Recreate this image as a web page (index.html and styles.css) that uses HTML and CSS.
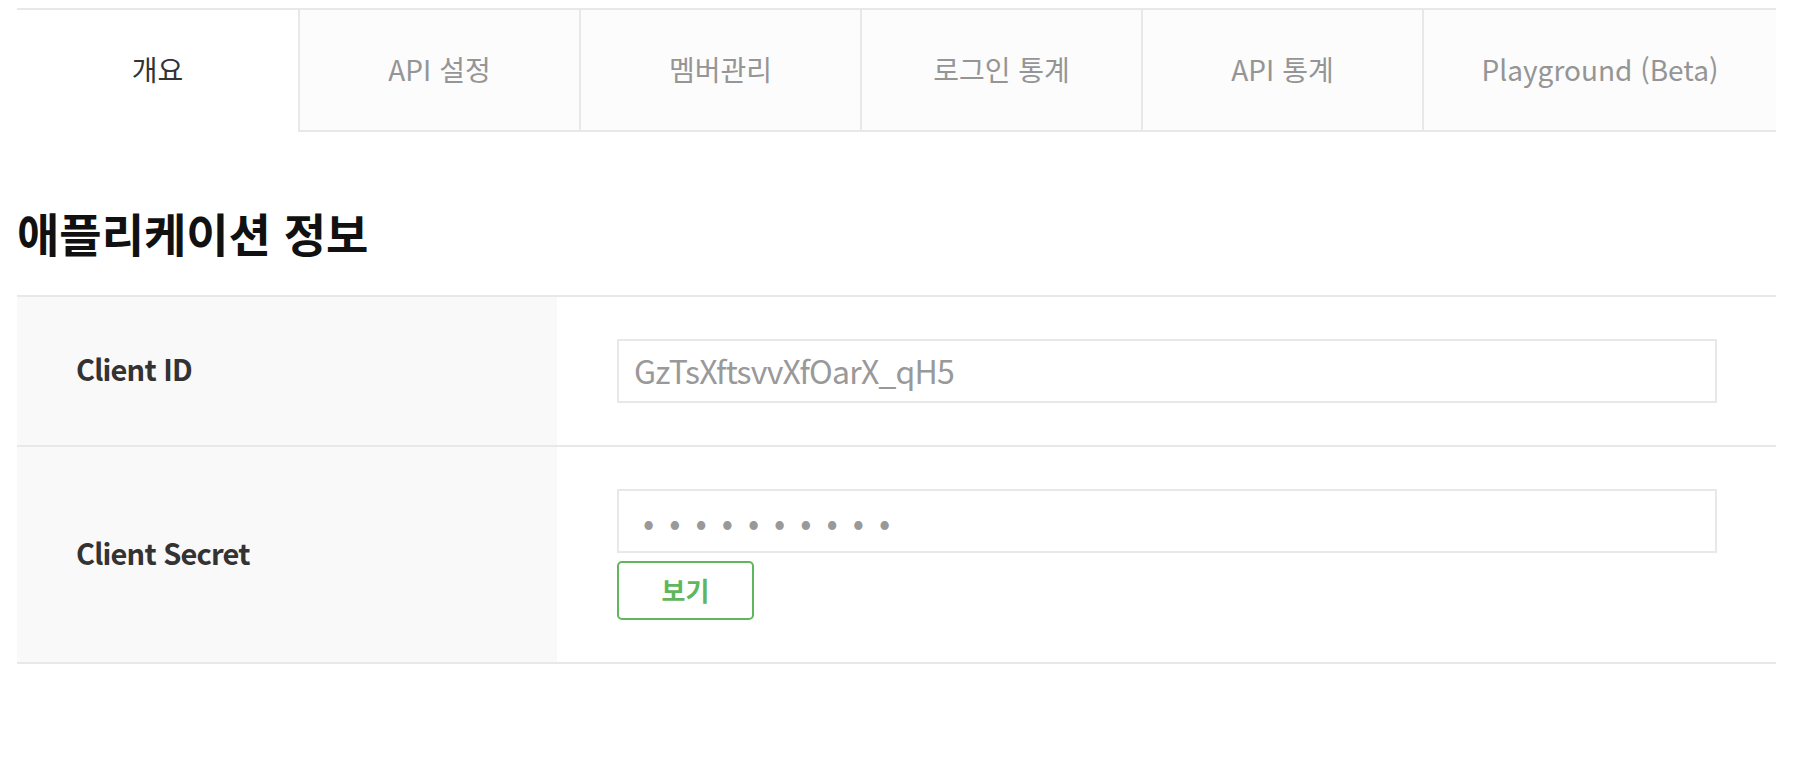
FILE: index.html
```html
<!DOCTYPE html>
<html lang="ko">

<head>
    <meta charset="UTF-8">
    <title>애플리케이션 정보</title>
    <meta name="viewport" content="width=device-width, initial-scale=1">
    <link rel="stylesheet" href="styles.css">
</head>

<body>
    <div class="app">
        <nav class="tabs">
            <a class="tabs__item tabs__item--active" href="#">개요</a>
            <a class="tabs__item" href="#">API 설정</a>
            <a class="tabs__item" href="#">멤버관리</a>
            <a class="tabs__item" href="#">로그인 통계</a>
            <a class="tabs__item" href="#">API 통계</a>
            <a class="tabs__item tabs__item--wide" href="#">Playground (Beta)</a>
        </nav>

        <h2 class="section-title">애플리케이션 정보</h2>

        <div class="info">
            <div class="info__row">
                <div class="info__label">Client ID</div>
                <div class="info__value">
                    <input class="field" type="text" value="GzTsXftsvvXfOarX_qH5" readonly>
                </div>
            </div>
            <div class="info__row">
                <div class="info__label">Client Secret</div>
                <div class="info__value">
                    <input class="field field--secret" type="password" value="xxxxxxxxxx" readonly>
                    <button class="btn" type="button">보기</button>
                </div>
            </div>
        </div>
    </div>
</body>

</html>
```

FILE: styles.css
```css
* {
    box-sizing: border-box;
    margin: 0;
    padding: 0;
}

:root {
    --line: #e8e8e8;
    --fg: #333;
    --muted: #999;
    --green: #5fb65c;
    --label-bg: #f9f9f9;
    font-family: "Noto Sans CJK KR", "Noto Sans", sans-serif;
}

body {
    background: #fff;
    color: var(--fg);
}

.app {
    margin: 8px 38px 0 17px;
}

/* Tab bar */
.tabs {
    display: flex;
    border-top: 2px solid var(--line);
}

.tabs__item {
    display: flex;
    align-items: center;
    justify-content: center;
    width: 281px;
    height: 122px;
    padding-bottom: 2px;
    background-color: #fcfcfc;
    border-left: 2px solid var(--line);
    border-bottom: 2px solid var(--line);
    color: #959595;
    font-size: 28px;
    text-decoration: none;
    white-space: nowrap;
}

.tabs__item--active {
    background-color: #fff;
    border-left: 0;
    border-bottom-color: transparent;
    color: var(--fg);
}

.tabs__item--wide {
    flex: 1;
}

.section-title {
    margin: 70px 0 33px;
    color: #111;
    font-size: 46px;
    font-weight: 700;
    line-height: 60px;
}

/* Info table */
.info {
    border-top: 2px solid var(--line);
}

.info__row {
    display: grid;
    grid-template-columns: 540px 1fr;
    border-bottom: 2px solid var(--line);
}

.info__label {
    display: flex;
    align-items: center;
    padding: 0 0 6px 59px;
    background-color: var(--label-bg);
    font-size: 29px;
    font-weight: 700;
    letter-spacing: -0.8px;
}

.info__value {
    padding: 42px 59px 42px 60px;
}

.field {
    display: block;
    width: 100%;
    height: 64px;
    padding: 0 15px 3px;
    border: 2px solid var(--line);
    background: #fff;
    color: var(--muted);
    font: 32px "Noto Sans CJK KR", "Noto Sans", sans-serif;
    letter-spacing: -0.8px;
    outline: none;
}

.field--secret {
    padding: 0 15px 0 24px;
    font-size: 33px;
    letter-spacing: 15px;
}

.btn {
    display: block;
    width: 137px;
    height: 59px;
    margin-top: 8px;
    padding-bottom: 2px;
    border: 2px solid var(--green);
    border-radius: 5px;
    background-color: #fff;
    color: var(--green);
    cursor: pointer;
    font: 700 26px "Noto Sans CJK KR", sans-serif;
}
```
